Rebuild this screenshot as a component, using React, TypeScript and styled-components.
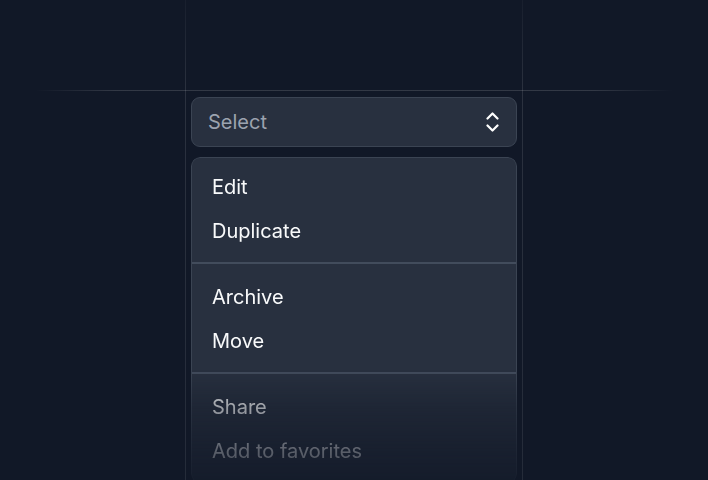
import React from "react";
import styled, { createGlobalStyle } from "styled-components";

const GlobalStyle = createGlobalStyle`
  html, body {
    margin: 0;
    padding: 0;
    background: #111827;
  }
  body {
    font-family: Inter, "Noto Sans", "Liberation Sans", sans-serif;
  }
`;

const Stage = styled.div`
  width: 708px;
  height: 480px;
  overflow: hidden;
  display: flex;
  justify-content: center;
  align-items: flex-start;
  background: #111827;
`;

const Frame = styled.div`
  position: relative;
  width: 326px;
  min-height: 480px;
  padding: 97px 6px 0 6px;
  display: flex;
  flex-direction: column;
  gap: 10px;

  /* guide rails */
  &::before,
  &::after {
    content: "";
    position: absolute;
    top: 0;
    bottom: 0;
    width: 1px;
    background: linear-gradient(
      to bottom,
      rgba(255, 255, 255, 0.03),
      rgba(255, 255, 255, 0.11) 90px,
      rgba(255, 255, 255, 0.08)
    );
  }
  &::before {
    left: 0;
  }
  &::after {
    right: 0;
  }
`;

const HorizontalRail = styled.div`
  position: absolute;
  top: 90px;
  left: -150px;
  right: -150px;
  height: 1px;
  background: linear-gradient(
    to right,
    rgba(255, 255, 255, 0),
    rgba(255, 255, 255, 0.14) 80px,
    rgba(255, 255, 255, 0.14) calc(100% - 80px),
    rgba(255, 255, 255, 0)
  );
`;

const Trigger = styled.button`
  box-sizing: border-box;
  flex-shrink: 0;
  height: 50px;
  width: 100%;
  display: flex;
  align-items: center;
  justify-content: space-between;
  padding: 0 17px 0 16px;
  background: #28303f;
  border: 1px solid #3b4453;
  border-radius: 9px;
  font-family: inherit;
  font-size: 20px;
  color: #9ca3af;
  cursor: pointer;
`;

const Menu = styled.ul`
  box-sizing: border-box;
  flex-shrink: 0;
  list-style: none;
  margin: 0;
  padding: 0;
  width: 100%;
  background: #28303f;
  border: 1px solid #3b4453;
  border-radius: 9px;
  -webkit-mask-image: linear-gradient(
    to bottom,
    #000 212px,
    rgba(0, 0, 0, 0.6) 250px,
    rgba(0, 0, 0, 0.32) 294px,
    rgba(0, 0, 0, 0.14) 330px
  );
  mask-image: linear-gradient(
    to bottom,
    #000 212px,
    rgba(0, 0, 0, 0.6) 250px,
    rgba(0, 0, 0, 0.32) 294px,
    rgba(0, 0, 0, 0.14) 330px
  );
`;

const Group = styled.li<{ $first?: boolean }>`
  padding: ${(p) => (p.$first ? "7px 0 9px" : "11px 0 9px")};
  & + & {
    border-top: 2px solid #424c5c;
  }
`;

const Item = styled.div`
  height: 44px;
  line-height: 44px;
  padding: 0 20px;
  font-size: 20px;
  color: #f9fafb;
  cursor: default;
`;

const ChevronsIcon = () => (
  <svg width="13" height="20" viewBox="0 0 13 20" fill="none">
    <path
      d="M1.5 6.5 L6.5 1.5 L11.5 6.5 M1.5 13.5 L6.5 18.5 L11.5 13.5"
      stroke="#ffffff"
      strokeWidth="2.2"
      strokeLinecap="round"
      strokeLinejoin="round"
    />
  </svg>
);

const groups = [
  ["Edit", "Duplicate"],
  ["Archive", "Move"],
  ["Share", "Add to favorites"],
];

const App: React.FC = () => {
  return (
    <Stage>
      <GlobalStyle />
      <Frame>
        <HorizontalRail />
        <Trigger>
          <span>Select</span>
          <ChevronsIcon />
        </Trigger>
        <Menu>
          {groups.map((group, index) => (
            <Group key={index} $first={index === 0}>
              {group.map((label) => (
                <Item key={label}>{label}</Item>
              ))}
            </Group>
          ))}
        </Menu>
      </Frame>
    </Stage>
  );
};

export default App;
